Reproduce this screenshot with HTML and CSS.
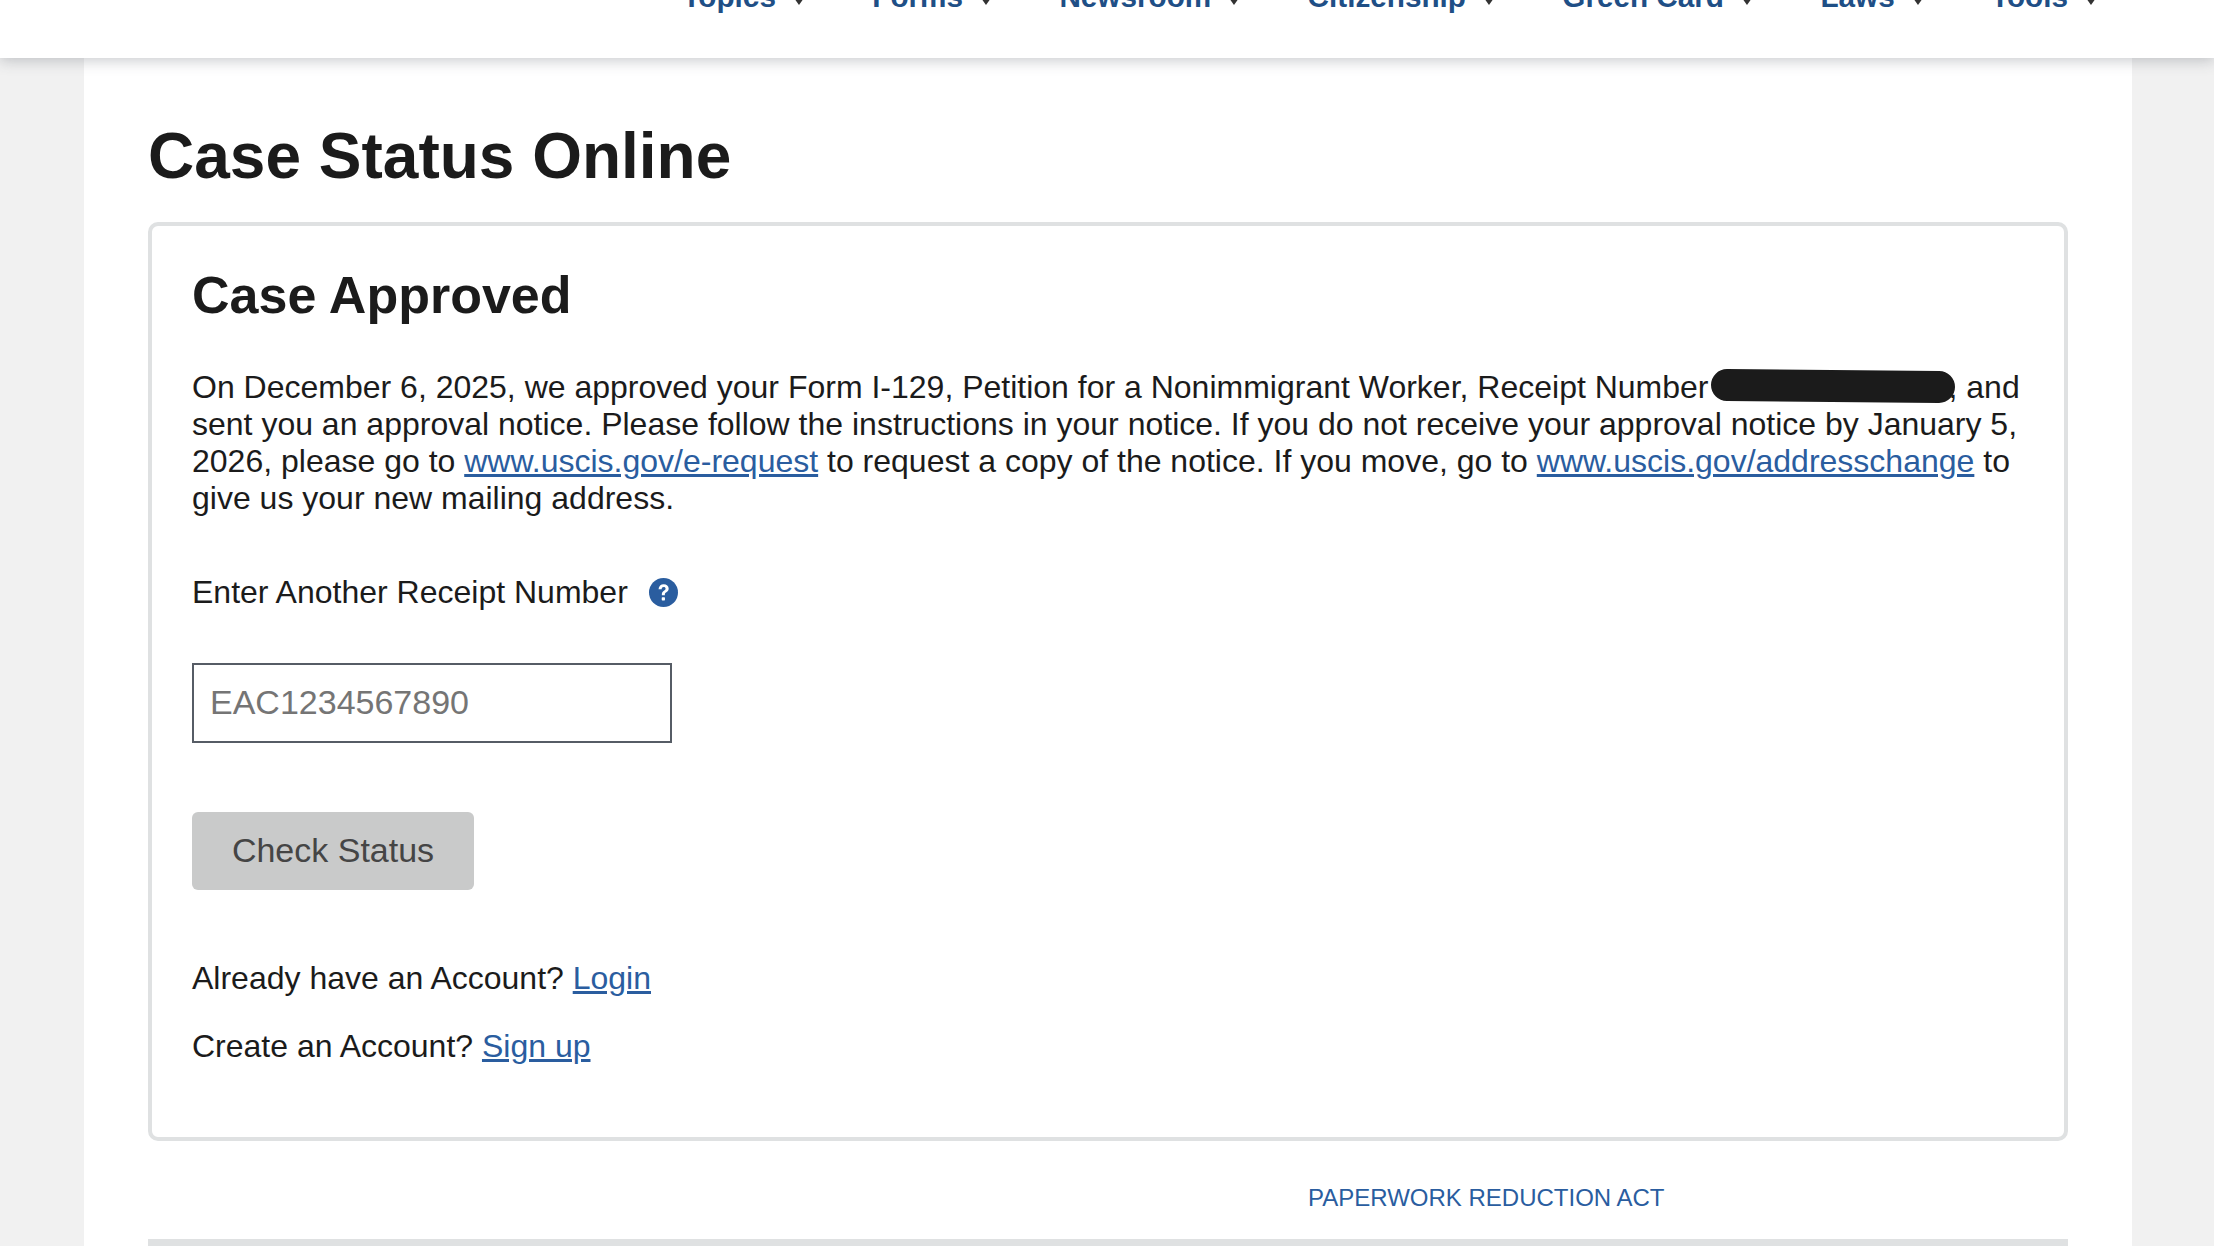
FILE: index.html
```html
<!DOCTYPE html>
<html lang="en">
<head>
<meta charset="utf-8">
<title>Case Status Online</title>
<link rel="stylesheet" href="styles.css">
</head>
<body>
<header class="site-header">
  <nav class="nav">
    <a class="nav-item">Topics<i class="caret"></i></a>
    <a class="nav-item">Forms<i class="caret"></i></a>
    <a class="nav-item">Newsroom<i class="caret"></i></a>
    <a class="nav-item">Citizenship<i class="caret"></i></a>
    <a class="nav-item">Green Card<i class="caret"></i></a>
    <a class="nav-item">Laws<i class="caret"></i></a>
    <a class="nav-item">Tools<i class="caret"></i></a>
  </nav>
</header>
<main class="page">
  <h1 class="title">Case Status Online</h1>
  <section class="card">
    <h2 class="status">Case Approved</h2>
    <p class="message">On December 6, 2025, we approved your Form I-129, Petition for a Nonimmigrant Worker, Receipt Number<span class="redact"></span>, and sent you an approval notice. Please follow the instructions in your notice. If you do not receive your approval notice by January 5, 2026, please go to <a href="#">www.uscis.gov/e-request</a> to request a copy of the notice. If you move, go to <a href="#">www.uscis.gov/addresschange</a> to give us your new mailing address.</p>
    <div class="field-label">
      <label for="receipt">Enter Another Receipt Number</label>
      <svg class="help" viewBox="0 0 28 28" width="29" height="29" aria-hidden="true">
        <circle cx="14" cy="14" r="14" fill="#2a5d9f"/>
        <path d="M9.2 10.8c.2-3 2.2-4.8 5-4.8 2.8 0 4.8 1.7 4.8 4.1 0 1.6-.8 2.7-2.2 3.6-1.2.8-1.5 1.2-1.5 2.3v.6h-2.9v-.9c0-1.6.6-2.5 2-3.4 1.1-.7 1.6-1.2 1.6-2 0-1-.7-1.6-1.8-1.6-1.2 0-1.9.8-2 2.1z" fill="#fff"/>
        <rect x="12.3" y="18.6" width="3.1" height="3.1" rx=".6" fill="#fff"/>
      </svg>
    </div>
    <input id="receipt" class="receipt" type="text" placeholder="EAC1234567890">
    <button class="check" type="button">Check Status</button>
    <p class="account">Already have an Account? <a href="#">Login</a></p>
    <p class="account">Create an Account? <a href="#">Sign up</a></p>
  </section>
  <div class="paperwork"><a href="#">PAPERWORK REDUCTION ACT</a></div>
  <div class="rule"></div>
</main>
</body>
</html>
```

FILE: styles.css
```css
* { box-sizing: border-box; }
html, body { margin: 0; height: 1246px; overflow: hidden; }
body {
  background: #f1f1f1;
  color: #1b1b1b;
  font-family: "Liberation Sans", Arial, sans-serif;
  font-size: 32px;
  line-height: 36.8px;
}
a { color: #2a5d9f; }

.site-header {
  position: relative;
  z-index: 2;
  height: 58px;
  background: #fff;
  box-shadow: 0 2px 14px rgba(60, 65, 80, .3);
  overflow: hidden;
}
.nav {
  display: flex;
  justify-content: flex-end;
  gap: 68.4px;
  padding-right: 118px;
  margin-top: -21px;
}
.nav-item {
  display: flex;
  align-items: center;
  font-size: 29.7px;
  font-weight: 700;
  line-height: 36px;
  color: #1f4f86;
}
.caret {
  width: 0;
  height: 0;
  margin: 8px 0 0 18px;
  border-left: 5px solid transparent;
  border-right: 5px solid transparent;
  border-top: 7px solid #333;
}

.page {
  width: 2048px;
  height: 1188px;
  margin-left: 84px;
  padding: 0 64px;
  background: #fff;
  display: flex;
  flex-direction: column;
}
.page > * { flex: none; }
.title {
  margin: 62px 0 0;
  font-size: 64px;
  line-height: 72px;
  font-weight: 700;
}
.card {
  margin-top: 30px;
  height: 919px;
  padding: 39px 40px 0 40px;
  border: 4px solid #dfe1e2;
  border-radius: 10px;
}
.status {
  margin: 0;
  font-size: 52px;
  line-height: 60px;
  font-weight: 700;
}
.message {
  margin: 44px 0 0;
  line-height: 37px;
}
.field-label {
  display: flex;
  align-items: center;
  gap: 21px;
  margin-top: 57px;
}
.help { display: block; }
.receipt {
  display: block;
  width: 480px;
  height: 80px;
  margin-top: 52px;
  padding: 0 16px;
  border: 2px solid #565c65;
  border-radius: 0;
  font: inherit;
  font-size: 34px;
  color: #1b1b1b;
  background: #fff;
  outline: none;
}
.receipt::placeholder { color: #757575; opacity: 1; }
.check {
  display: block;
  width: 282px;
  height: 78px;
  margin-top: 69px;
  border: 0;
  border-radius: 6px;
  background: #c9caca;
  color: #454545;
  font: inherit;
  font-size: 34px;
}
.account { margin: 0; }
.check + .account { margin-top: 70px; }
.account + .account { margin-top: 31px; }
.redact {
  display: inline-block;
  width: 244px;
  height: 32px;
  margin: 0 -6px 0 2px;
  border-radius: 16px;
  background: #1b1b1b;
  vertical-align: -4px;
  transform: rotate(.5deg);
  position: relative;
  z-index: 1;
}
.paperwork {
  margin-top: 39px;
  padding-left: 1160px;
  font-size: 24px;
  line-height: 36px;
  white-space: nowrap;
}
.paperwork a { text-decoration: none; }
.rule {
  margin-top: 23px;
  height: 7px;
  background: #dfe1e2;
}
```
